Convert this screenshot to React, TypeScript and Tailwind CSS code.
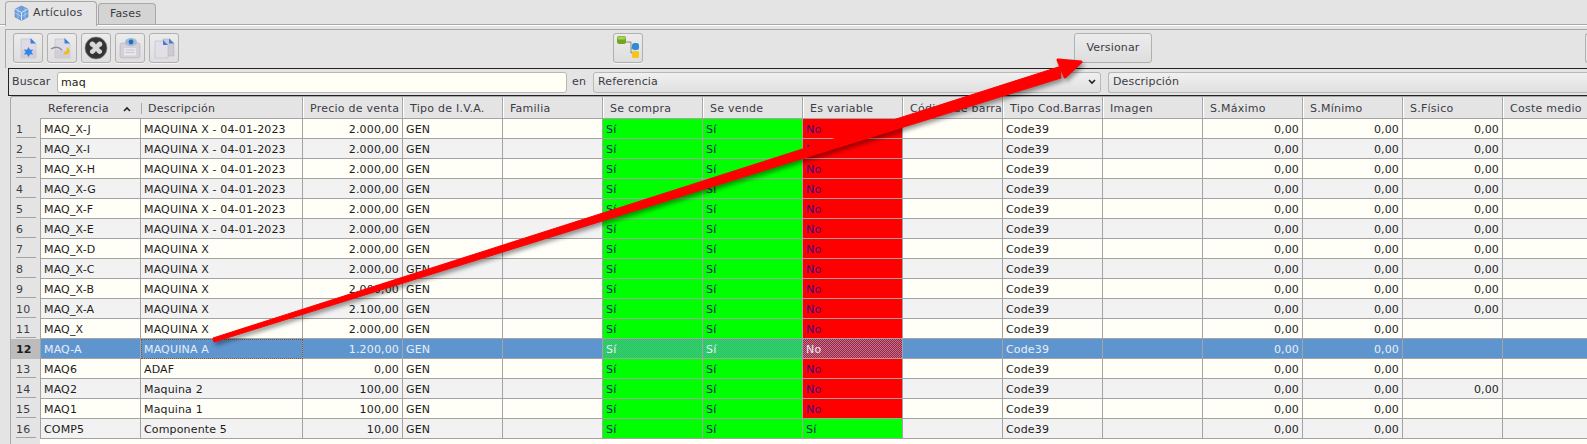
const rows = [
  ["MAQ_X-J", "MAQUINA X - 04-01-2023", "2.000,00", "No", "0,00"],
  ["MAQ_X-I", "MAQUINA X - 04-01-2023", "2.000,00", "No", "0,00"],
  ["MAQ_X-H", "MAQUINA X - 04-01-2023", "2.000,00", "No", "0,00"],
  ["MAQ_X-G", "MAQUINA X - 04-01-2023", "2.000,00", "No", "0,00"],
  ["MAQ_X-F", "MAQUINA X - 04-01-2023", "2.000,00", "No", "0,00"],
  ["MAQ_X-E", "MAQUINA X - 04-01-2023", "2.000,00", "No", "0,00"],
  ["MAQ_X-D", "MAQUINA X", "2.000,00", "No", "0,00"],
  ["MAQ_X-C", "MAQUINA X", "2.000,00", "No", "0,00"],
  ["MAQ_X-B", "MAQUINA X", "2.000,00", "No", "0,00"],
  ["MAQ_X-A", "MAQUINA X", "2.100,00", "No", "0,00"],
  ["MAQ_X", "MAQUINA X", "2.000,00", "No", ""],
  ["MAQ-A", "MAQUINA A", "1.200,00", "No", ""],
  ["MAQ6", "ADAF", "0,00", "No", ""],
  ["MAQ2", "Maquina 2", "100,00", "No", "0,00"],
  ["MAQ1", "Maquina 1", "100,00", "No", ""],
  ["COMP5", "Componente 5", "10,00", "Sí", ""],
];

const headers = ["Referencia", "Descripción", "Precio de venta", "Tipo de I.V.A.", "Familia", "Se compra", "Se vende", "Es variable", "Código de barras", "Tipo Cod.Barras", "Imagen", "S.Máximo", "S.Mínimo", "S.Físico", "Coste medio"];

const colGrid = "grid grid-cols-[29px_101px_162px_repeat(13,100px)]";

function Cell({ children, right, className }: { children?: React.ReactNode; right?: boolean; className?: string }) {
  return (
    <div className={`h-5 px-[3px] leading-[21px] border-r border-b border-[#a3a3a3] whitespace-nowrap overflow-hidden ${right ? "text-right" : ""} ${className ?? ""}`}>
      {children}
    </div>
  );
}

function ToolButton({ children, className }: { children: React.ReactNode; className?: string }) {
  return (
    <button className={`w-[30px] h-[30px] shrink-0 flex items-center justify-center rounded-[3px] border border-[#b0b0b0] bg-gradient-to-b from-[#ececec] to-[#dedede] shadow-[0_1px_0_#f5f5f5] ${className ?? ""}`}>
      {children}
    </button>
  );
}

function PageIcon({ children }: { children?: React.ReactNode }) {
  return (
    <svg width="24" height="24" viewBox="0 0 24 24">
      <path d="M5 3h10l5 5v14H5z" fill="#dedbe5" stroke="#c2bfca" strokeWidth="0.6" />
      <path d="M5 14h15v8H5z" fill="#c9c5d1" opacity="0.6" />
      <path d="M14.500 2l5.500 5.500h-5.500z" fill="#3f7fd6" />
      {children}
    </svg>
  );
}

export default function App() {
  return (
    <div className="relative w-[1587px] h-[444px] overflow-hidden bg-[#e4e4e4] text-[11px] tracking-[0.15px] text-[#1c1c1c] font-['DejaVu_Sans',sans-serif]">
      {/* tabs */}
      <div className="h-[25px] pl-[5px] flex items-end border-b border-[#a8a8a8]">
        <div className="relative z-10 w-[92px] h-[25px] -mb-[2px] flex items-center gap-[4px] pl-[8px] pb-[2px] text-[#3c3c46] bg-[#e4e4e4] border border-b-0 border-[#a8a8a8] rounded-t-[4px]">
          <svg width="15" height="16" viewBox="0 0 15 16">
            <path d="M7.500 1l6.500 3v8l-6.500 3.500L1 12V4z" fill="#6c9fdb" stroke="#4a7cb8" strokeWidth="0.5" />
            <path d="M1 4l6.500 3.500L14 4M7.500 7.500v8" fill="none" stroke="#d8e8f8" strokeWidth="1" />
            <path d="M4 2.500v11M11 2.500v11M1 8l6.500 3.500L14 8" fill="none" stroke="#bcd6f2" strokeWidth="0.6" />
          </svg>
          Artículos
        </div>
        <div className="w-[58px] h-[21px] ml-[1px] flex items-center pl-[11px] text-[#3c3c46] bg-[#d4d4d4] border border-b-0 border-[#a8a8a8] rounded-t-[4px]">
          Fases
        </div>
      </div>
      <div className="h-[4px] border-t border-white" />

      {/* toolbar */}
      <div className="ml-[5px] h-[39px] border-t border-l border-[#a8a8a8] flex items-start pt-[3px] pl-[7px]">
        <div className="flex gap-[4px] shrink-0">
          <ToolButton>
            <PageIcon>
              <path d="M12.500 11l1.500 2.800 3.200-.3-1.900 2.500 1.900 2.500-3.200-.3-1.500 2.800-1.500-2.800-3.200.3 1.900-2.500-1.900-2.500 3.200.3z" fill="#2f86e4" />
            </PageIcon>
          </ToolButton>
          <ToolButton>
            <PageIcon>
              <path d="M1 13c4-2.500 8-2 11 1" fill="none" stroke="#8f8f8f" strokeWidth="1.400" />
              <path d="M17 11c4 2.500 3 8.500-3.500 7.500l1-2.500c2 .3 3-2 2-3.500z" fill="#f2b90f" />
            </PageIcon>
          </ToolButton>
          <ToolButton>
            <svg width="24" height="24" viewBox="0 0 24 24">
              <circle cx="12" cy="12" r="11" fill="#353335" stroke="#8c8a8c" strokeWidth="0.7" />
              <path d="M8.500 5.500c1.500 0 3 2 3.500 3 .5-1 2-3 3.500-3 2.500 0 3.500 2.500 2.500 4-.5.8-2.500 2-3.300 2.500.8.500 2.800 1.700 3.300 2.800.6 1.700-.8 3.200-2.500 3.200-1.700 0-3-2-3.500-2.900-.5.900-1.800 2.900-3.500 2.900-1.700 0-3.100-1.500-2.500-3.200.5-1.100 2.500-2.300 3.300-2.800-.8-.5-2.800-1.700-3.300-2.500-1-1.500 0-4 2.500-4z" fill="#d9d7d9" />
            </svg>
          </ToolButton>
          <ToolButton>
            <svg width="24" height="24" viewBox="0 0 24 24">
              <rect x="2" y="7" width="20" height="15" rx="2" fill="#d4cfd8" stroke="#b5b2bb" strokeWidth="0.6" />
              <rect x="6" y="12" width="12" height="7.500" fill="#e9e6ec" />
              <path d="M7.500 14h9M7.500 16.500h9" stroke="#b9b6bf" strokeWidth="0.7" />
              <ellipse cx="13" cy="6" rx="6" ry="4" fill="#9cbcdc" />
              <circle cx="13" cy="6" r="2.400" fill="#2a6db5" />
            </svg>
          </ToolButton>
          <ToolButton>
            <svg width="24" height="24" viewBox="0 0 24 24">
              <path d="M11 3h7l4 4v13H11z" fill="#cfcbd6" stroke="#b5b2bb" strokeWidth="0.6" />
              <path d="M17 2.500l5 5h-5z" fill="#3f7fd6" />
              <path d="M3 5h9l4 4v13H3z" fill="#e2dfe7" stroke="#bdbac4" strokeWidth="0.6" />
              <path d="M11 4l5 5h-5z" fill="#3f7fd6" />
            </svg>
          </ToolButton>
        </div>
        <ToolButton className="ml-[434px]">
          <svg width="26" height="26" viewBox="0 0 26 26">
            <path d="M11 7h5v6h2M16 13v5h2" fill="none" stroke="#6f7378" strokeWidth="0.8" />
            <rect x="2" y="1" width="9" height="8" rx="2" fill="#74a51c" />
            <rect x="2.500" y="1.500" width="8" height="3" rx="1.500" fill="#a8cf62" />
            <rect x="17" y="8" width="7" height="7" rx="2.500" fill="#2f8bd8" />
            <rect x="17" y="16" width="7" height="7" rx="1.500" fill="#f5c518" />
          </svg>
        </ToolButton>
        <button className="ml-[431px] w-[78px] h-[30px] shrink-0 rounded-[3px] border border-[#b0b0b0] bg-gradient-to-b from-[#ececec] to-[#dedede] text-[#3c3c46]">
          Versionar
        </button>
        <div className="ml-[433px] w-[10px] h-[30px] shrink-0 rounded-l-[3px] border border-r-0 border-[#b0b0b0] bg-[#e8e8e8]" />
      </div>

      {/* search bar */}
      <div className="ml-[8px] h-[28px] border-y border-l border-[#222] flex items-center pl-[3px] text-[#3c3c46]">
        <span className="w-[45px] shrink-0">Buscar</span>
        <input readOnly value="maq" className="w-[510px] h-[21px] shrink-0 px-[3px] rounded-[3px] border border-[#b8b8b8] bg-[#fffff6] text-[#1c1c1c] outline-none" />
        <span className="ml-[5px] w-[21px] shrink-0">en</span>
        <div className="w-[508px] h-[21px] shrink-0 px-[4px] flex items-center justify-between rounded-[3px] border border-[#b8b8b8] bg-gradient-to-b from-[#f0f0f0] to-[#e0e0e0]">
          Referencia
          <svg width="8" height="6" viewBox="0 0 8 6"><path d="M1 1l3 3 3-3" fill="none" stroke="#222" strokeWidth="1.600" /></svg>
        </div>
        <div className="ml-[7px] w-[500px] h-[21px] shrink-0 px-[4px] flex items-center rounded-l-[3px] border border-r-0 border-[#b8b8b8] bg-gradient-to-b from-[#f0f0f0] to-[#e0e0e0]">
          Descripción
        </div>
      </div>

      {/* table */}
      <div className="ml-[10px] h-[348px] border-t border-l border-[#a8a8a8] rounded-tl-[3px] bg-[#e4e4e4] relative">
        <div className="w-[1630px]">
          <div className={`${colGrid} h-[22px]`}>
            <div />
            {headers.map((h, i) => (
              <div key={h} className={`relative h-[22px] leading-[23px] tracking-[0.25px] text-[#3c3c46] whitespace-nowrap overflow-hidden border-b border-[#a3a3a3] ${i === 0 ? "pl-[8px]" : i === 1 ? "pl-[7px]" : "pl-[7px] border-l border-l-[#a8a8a8] shadow-[inset_1px_0_0_#fff] -ml-[1px]"}`}>
                {h}
                {i === 0 && (
                  <svg className="absolute right-[10px] top-[9px]" width="8" height="6" viewBox="0 0 8 6"><path d="M1 5l3-3 3 3" fill="none" stroke="#222" strokeWidth="1.600" /></svg>
                )}
                {i === 1 && <div className="absolute left-0 top-[6px] h-[11px] w-px bg-[#a8a8a8]" />}
              </div>
            ))}
          </div>
          {rows.map((r, i) => {
            const selected = i === 11;
            const base = selected ? "bg-[#5f95cf] text-[#e8eef6]" : i % 2 === 0 ? "bg-[#fffff8]" : "bg-[#f2f2f2]";
            const green = selected
              ? "bg-[repeating-conic-gradient(#00ff00_0_25%,#5f95cf_0_50%)] bg-[length:2px_2px] text-[#e8eef6]"
              : "bg-[#00ff00] text-[#1a1a6e]";
            const red = selected
              ? "bg-[repeating-conic-gradient(#ff0000_0_25%,#5f95cf_0_50%)] bg-[length:2px_2px] text-[#e8eef6]"
              : "bg-[#ff0000] text-[#3c0a8c]";
            return (
              <div key={i} className={colGrid}>
                <div className={`h-5 pl-[5px] leading-[21px] ${selected ? "bg-[#bcbcbc] font-bold" : "text-[#3c3c46]"}`}>
                  <div className={`w-[20px] h-[19px] ${selected ? "" : "border-b border-[#a3a3a3]"}`}>{i + 1}</div>
                </div>
                <Cell className={`${base} border-l`}>{r[0]}</Cell>
                <Cell className={`${base} ${selected ? "outline-1 outline-dotted -outline-offset-1 outline-[#7a5a3a]" : ""}`}>{r[1]}</Cell>
                <Cell right className={base}>{r[2]}</Cell>
                <Cell className={base}>GEN</Cell>
                <Cell className={base} />
                <Cell className={green}>Sí</Cell>
                <Cell className={green}>Sí</Cell>
                <Cell className={r[3] === "No" ? red : green}>{r[3]}</Cell>
                <Cell className={base} />
                <Cell className={base}>Code39</Cell>
                <Cell className={base} />
                <Cell right className={base}>0,00</Cell>
                <Cell right className={base}>0,00</Cell>
                <Cell right className={base}>{r[4]}</Cell>
                <Cell className={base} />
              </div>
            );
          })}
        </div>
        <div className="ml-[29px] h-[10px] bg-[#fffff8]" />
      </div>

      {/* annotation arrow over the screenshot */}
      <svg className="absolute inset-0 pointer-events-none drop-shadow-[2px_3px_2px_rgba(0,0,0,0.4)]" width="1587" height="444" viewBox="0 0 1587 444">
        <path d="M213 338L1060 66.500L1061 78L214 342z" fill="#ff0000" stroke="#ff0000" strokeWidth="1" strokeLinejoin="round" />
        <path d="M1058 60L1081 62L1065 77z" fill="#ff0000" stroke="#ff0000" strokeWidth="3" strokeLinejoin="round" />
      </svg>
    </div>
  );
}
